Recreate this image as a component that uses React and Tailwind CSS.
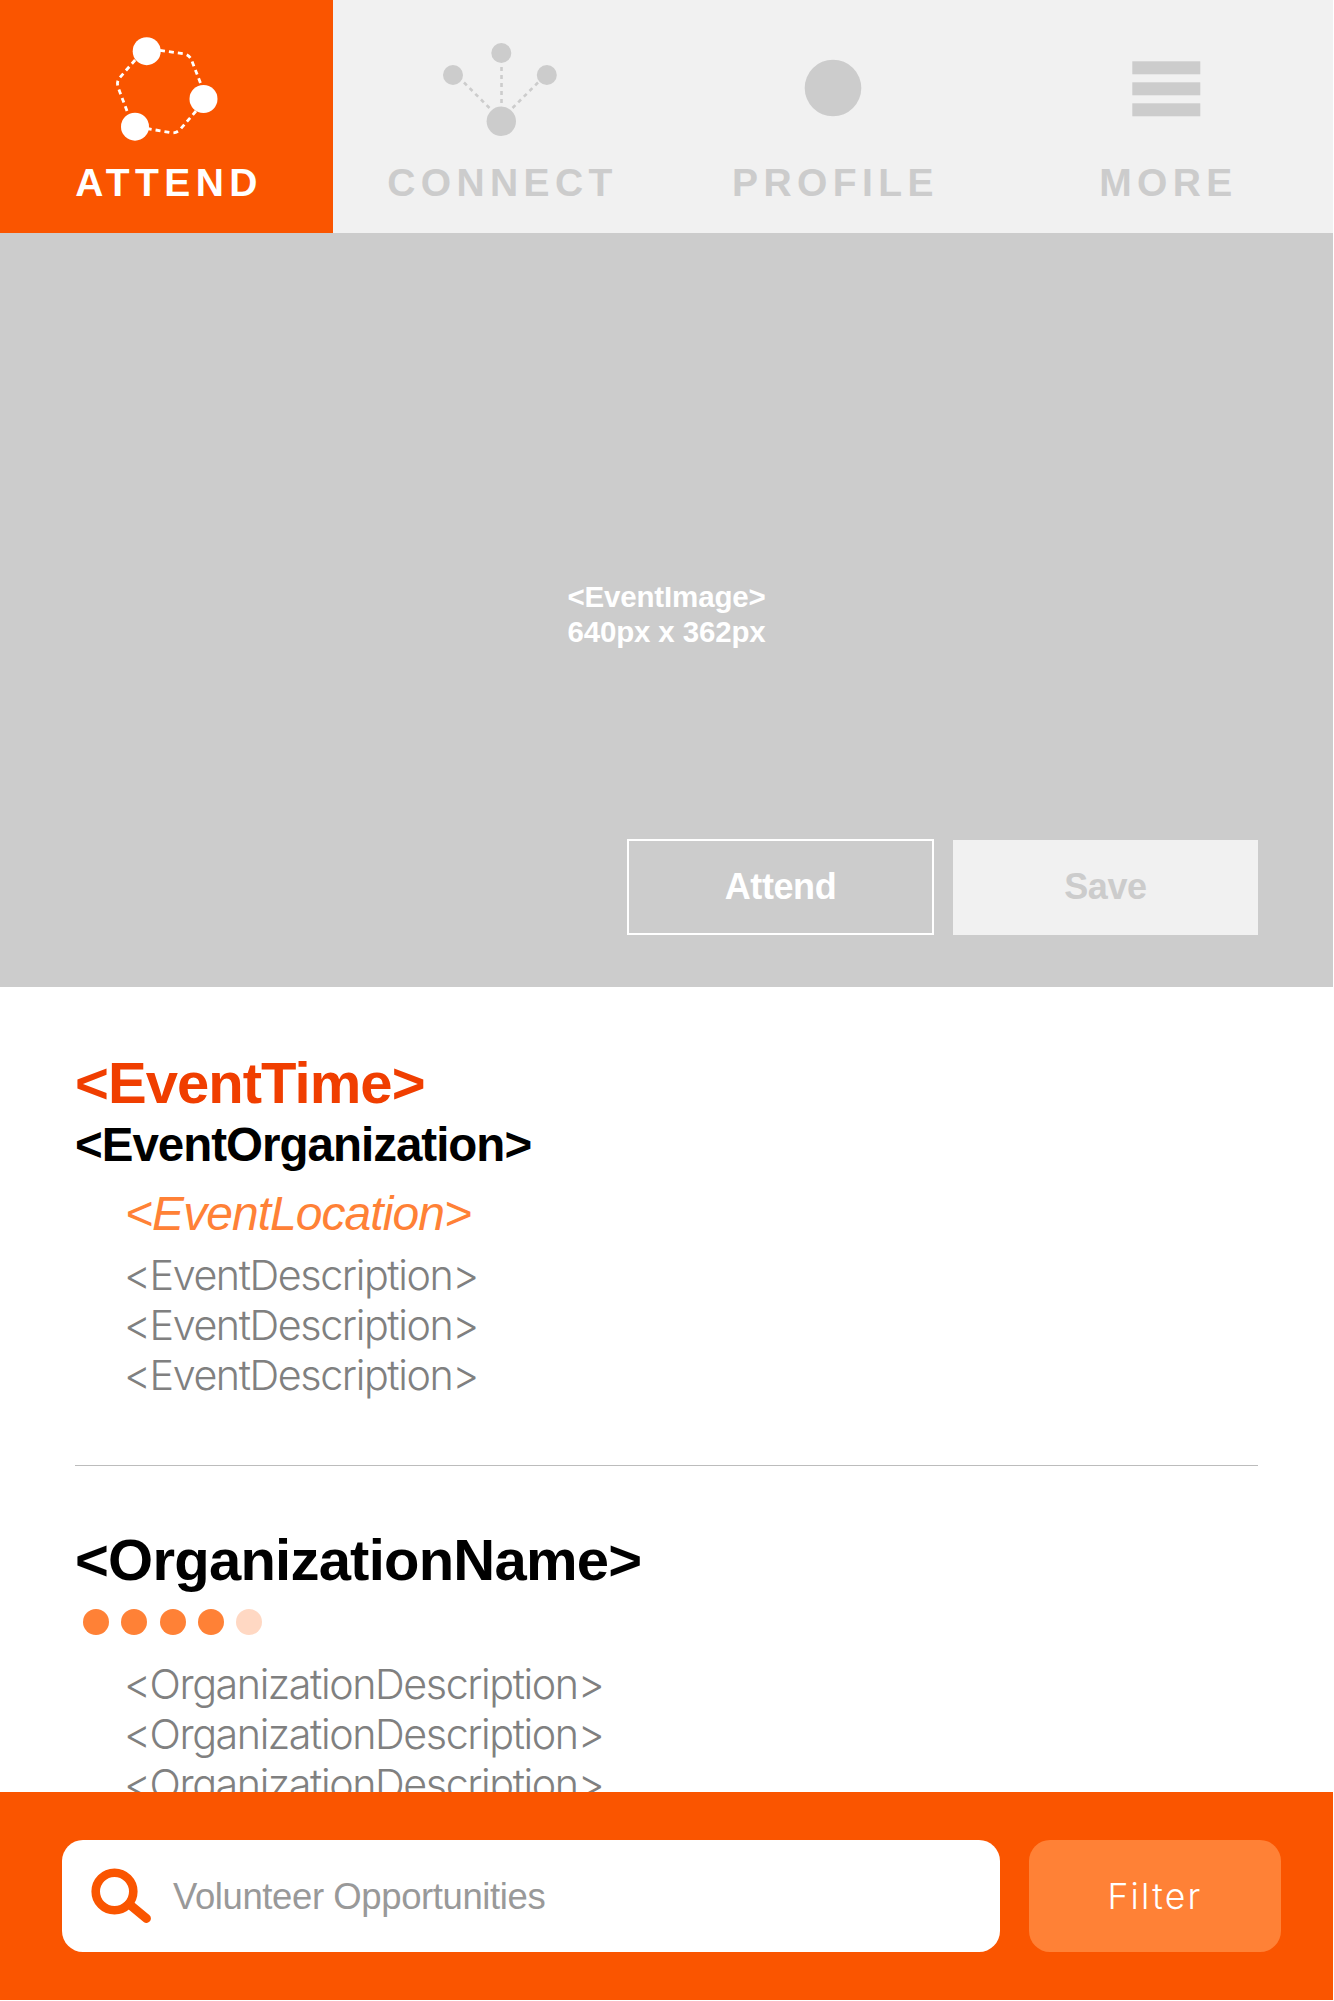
const AttendIcon = () => (
  <svg viewBox="0 0 333 162" className="block h-[162px] w-[333px]" fill="currentColor">
    <g fill="none" stroke="currentColor" strokeWidth="2.8" strokeDasharray="5 4">
      <path d="M160 50.3L184 53.8Q189.500 55 191.500 60L202 87" />
      <path d="M196 111L181 128.500Q177 133.500 171 132.700L147 128.500" />
      <path d="M127 111L118 87Q116.500 82 119 78.500L136 59" />
    </g>
    <circle cx="146.700" cy="51.200" r="14" />
    <circle cx="203.500" cy="99" r="14" />
    <circle cx="135" cy="126.700" r="14" />
  </svg>
);

const ConnectIcon = () => (
  <svg viewBox="0 0 333 162" className="block h-[162px] w-[333px]" fill="currentColor">
    <g fill="none" stroke="currentColor" strokeWidth="2.6" strokeDasharray="4 4">
      <path d="M131 82.500L158 109.500" />
      <path d="M168.500 67V108" />
      <path d="M205 82.500L178 109.500" />
    </g>
    <circle cx="168.300" cy="53" r="10" />
    <circle cx="120" cy="75" r="10" />
    <circle cx="213.800" cy="75" r="10" />
    <circle cx="168.300" cy="121.300" r="14.700" />
  </svg>
);

const ProfileIcon = () => (
  <svg viewBox="0 0 333 162" className="block h-[162px] w-[333px]" fill="currentColor">
    <circle cx="167" cy="88" r="28.300" />
  </svg>
);

const MoreIcon = () => (
  <svg viewBox="0 0 333 162" className="block h-[162px] w-[333px]" fill="currentColor">
    <rect x="133.300" y="61.300" width="68" height="13" />
    <rect x="133.300" y="82.300" width="68" height="13" />
    <rect x="133.300" y="103.300" width="68" height="13" />
  </svg>
);

const SearchIcon = () => (
  <svg viewBox="0 0 62 58" className="block h-[58px] w-[62px]" fill="none" stroke="#fa5500">
    <circle cx="24.500" cy="24.500" r="18.800" strokeWidth="8.600" />
    <path d="M39 37L56.500 51.500" strokeWidth="8.800" strokeLinecap="round" />
  </svg>
);

const tabs = [
  { label: "ATTEND", Icon: AttendIcon, tab: "bg-[#fa5500] text-white", text: "pl-[5px]" },
  { label: "CONNECT", Icon: ConnectIcon, tab: "text-[#cccccc]", text: "pl-[6px]" },
  { label: "PROFILE", Icon: ProfileIcon, tab: "text-[#cccccc]", text: "pl-[6px]" },
  { label: "MORE", Icon: MoreIcon, tab: "text-[#cccccc]", text: "pl-[6px]" },
];

const Description = ({ text, tracking }) => (
  <div className={`pl-[49px] font-['Inter',sans-serif] text-[41.25px] leading-[50px] font-light text-[#808080] ${tracking}`}>
    {[0, 1, 2].map((i) => (
      <p key={i} className="whitespace-nowrap">{text}</p>
    ))}
  </div>
);

export default function App() {
  return (
    <div className="flex h-[2000px] w-[1333px] flex-col overflow-hidden bg-white font-['Liberation_Sans',Arial,sans-serif]">
      <nav className="flex h-[233px] shrink-0 bg-[#f1f1f1]">
        {tabs.map(({ label, Icon, tab, text }) => (
          <button key={label} className={`flex h-full w-[333px] flex-col items-center ${tab}`}>
            <Icon />
            <span className={`pt-px text-[39px] leading-10 font-bold tracking-[5.4px] ${text}`}>{label}</span>
          </button>
        ))}
      </nav>

      <section className="flex h-[754px] shrink-0 flex-col justify-between bg-[#cccccc] pt-[346px] pr-[75px] pb-[52px] font-bold">
        <div className="pl-[75px] text-center text-[29.500px] leading-[35px] tracking-[-0.15px] text-white">
          <p>&lt;EventImage&gt;</p>
          <p>640px x 362px</p>
        </div>
        <div className="flex items-center justify-end gap-[19px] text-[36px] tracking-[-0.4px]">
          <button className="h-[96px] w-[307px] border-2 border-white text-white">Attend</button>
          <button className="h-[95px] w-[305px] bg-[#f1f1f1] text-[#cccccc]">Save</button>
        </div>
      </section>

      <main className="h-[805px] shrink-0 overflow-hidden px-[75px] pt-[66px]">
        <h1 className="text-[58px] leading-[60px] font-bold tracking-[-0.95px] text-[#f03e00]">&lt;EventTime&gt;</h1>
        <h2 className="mt-[4px] text-[47.500px] leading-[56px] font-bold tracking-[-1px] text-black">&lt;EventOrganization&gt;</h2>
        <p className="mt-[13px] pl-[50px] text-[48px] leading-[56px] tracking-[-0.95px] text-[#ff8136] italic">&lt;EventLocation&gt;</p>
        <div className="mt-[8px]">
          <Description text="<EventDescription>" tracking="tracking-[-1.42px]" />
        </div>
        <hr className="mt-[65px] h-px border-0 bg-[#bcbcbc]" />
        <h1 className="mt-16 text-[58px] leading-[60px] font-bold tracking-[-0.77px] text-black">&lt;OrganizationName&gt;</h1>
        <div className="mt-[19px] flex gap-[12.300px] pl-2">
          {[0, 1, 2, 3].map((i) => (
            <span key={i} className="size-[26px] rounded-full bg-[#ff8136]" />
          ))}
          <span className="size-[26px] rounded-full bg-[#ffd8c3]" />
        </div>
        <div className="mt-6">
          <Description text="<OrganizationDescription>" tracking="tracking-[-1.42px]" />
        </div>
      </main>

      <footer className="flex h-[208px] shrink-0 gap-[29px] bg-[#fa5500] pt-12 pl-[62px]">
        <div className="flex h-28 w-[938px] items-center rounded-[21px] bg-white pl-7">
          <SearchIcon />
          <span className="pt-px pl-[21px] text-[36.500px] leading-10 tracking-[-0.4px] text-[#999]">Volunteer Opportunities</span>
        </div>
        <button className="h-28 w-[252px] rounded-[21px] bg-[#ff8136] pt-[2px] font-['Inter',sans-serif] text-[35.500px] font-light tracking-[2.2px] text-white">Filter</button>
      </footer>
    </div>
  );
}
